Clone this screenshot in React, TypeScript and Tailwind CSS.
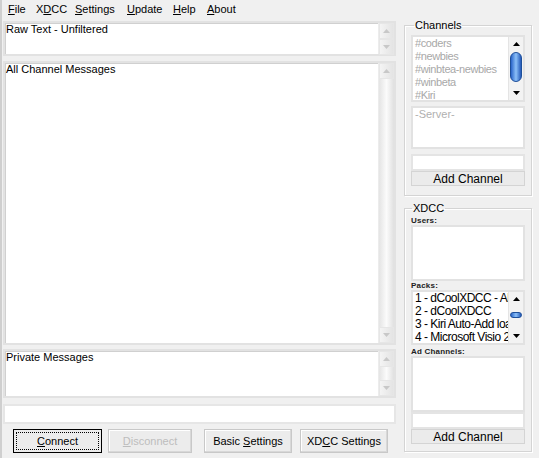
import React from "react";

function Arrow({ up, color }: { up?: boolean; color: string }) {
  return (
    <svg width="7" height="4" viewBox="0 0 7 4">
      <polygon points={up ? "3.5,0 7,4 0,4" : "0,0 7,0 3.5,4"} fill={color} />
    </svg>
  );
}

function PaleScroll({ short }: { short?: boolean }) {
  return (
    <div className="flex flex-col w-[16px] h-full shrink-0 border-l border-[#ececec]">
      <div className="h-[16px] shrink-0 flex items-center justify-center bg-gradient-to-r from-[#f4f4f4] to-[#e4e4e4] border border-[#e6e6e6]">
        <Arrow up color="#c8c8c8" />
      </div>
      {short ? (
        <div className="flex-1" />
      ) : (
        <div className="flex-1 bg-gradient-to-r from-[#e4e4e4] via-[#fbfbfb] to-[#e0e0e0]" />
      )}
      <div className="h-[16px] shrink-0 flex items-center justify-center bg-gradient-to-r from-[#f4f4f4] to-[#e4e4e4] border border-[#e6e6e6]">
        <Arrow color="#c8c8c8" />
      </div>
    </div>
  );
}

function BlueScroll({ thumbTop, thumbH }: { thumbTop: number; thumbH: number }) {
  return (
    <div className="flex flex-col w-[15px] h-full shrink-0 bg-[#f3f3f3] border-l border-[#e4e4e4]">
      <div className="h-[14px] shrink-0 flex items-center justify-center">
        <Arrow up color="#000" />
      </div>
      <div className="flex-1 relative">
        <div
          className="absolute left-[1px] right-[1px] rounded-[6px] border border-[#1d4f9a] bg-gradient-to-r from-[#2a64c8] via-[#8cc0f8] to-[#2559b8]"
          style={{ top: thumbTop, height: thumbH }}
        />
      </div>
      <div className="h-[14px] shrink-0 flex items-center justify-center">
        <Arrow color="#000" />
      </div>
    </div>
  );
}

function TextBox({ label, h, short }: { label: string; h: string; short?: boolean }) {
  return (
    <div className={`flex ${h} bg-white border-2 border-[#e2e2e2] shadow-[inset_1px_1px_0_#d0d0d0]`}>
      <div className="flex-1 px-[1px] text-[11px] leading-[13px] text-black">{label}</div>
      <PaleScroll short={short} />
    </div>
  );
}

function Btn({ children, w, focus, disabled }: { children: React.ReactNode; w: string; focus?: boolean; disabled?: boolean }) {
  return (
    <div
      className={`${w} h-[24px] flex items-center justify-center p-[2px] bg-[#ececec] text-[11px] ${
        focus ? "border border-black" : "border border-[#c8c8c8] shadow-[inset_-1px_-1px_0_#d8d8d8,inset_1px_1px_0_#fff]"
      } ${disabled ? "text-[#bdbdbd]" : "text-black"}`}
    >
      <div className={`w-full h-full flex items-center justify-center ${focus ? "border border-dotted border-black" : ""}`}>
        {children}
      </div>
    </div>
  );
}

function SmallLabel({ children }: { children: React.ReactNode }) {
  return <div className="h-[8px] text-[8px] leading-[8px] font-bold text-[#222] tracking-[0.2px]">{children}</div>;
}

function Field({ h }: { h: string }) {
  return <div className={`${h} bg-white border-2 border-[#e4e4e4]`} />;
}

function AddBtn() {
  return (
    <div className="h-[15px] flex items-center justify-center bg-[#ebebeb] border border-[#d4d4d4] text-[12px] leading-[12px] text-black">
      Add Channel
    </div>
  );
}

export default function App() {
  const channels = ["#coders", "#newbies", "#winbtea-newbies", "#winbeta", "#Kiri"];
  const packs = ["1 - dCoolXDCC - All", "2 - dCoolXDCC", "3 - Kiri Auto-Add load", "4 - Microsoft Visio 2003"];

  return (
    <div className="w-[539px] h-[458px] overflow-hidden bg-[#f0f0f0] border-l-2 border-[#cfcfcf] font-['Liberation_Sans',Arial,sans-serif] flex flex-col">
      <div className="h-[19px] flex items-center pl-[6px] text-[11px] text-black">
        <span className="w-[28px]"><u>F</u>ile</span>
        <span className="w-[39px]">X<u>D</u>CC</span>
        <span className="w-[52px]"><u>S</u>ettings</span>
        <span className="w-[46px]"><u>U</u>pdate</span>
        <span className="w-[34px]"><u>H</u>elp</span>
        <span><u>A</u>bout</span>
      </div>

      <div className="flex flex-1">
        <div className="w-[394px] pl-[1px] pt-[2px] flex flex-col">
          <TextBox label="Raw Text - Unfiltered" h="h-[35px]" short />
          <div className="h-[5px]" />
          <TextBox label="All Channel Messages" h="h-[284px]" />
          <div className="h-[4px]" />
          <TextBox label="Private Messages" h="h-[49px]" />
          <div className="h-[6px]" />
          <div className="h-[20px] bg-white border-2 border-[#e6e6e6]" />
          <div className="flex items-center mt-[5px] pl-[10px]">
            <Btn w="w-[89px]" focus>
              <span><u>C</u>onnect</span>
            </Btn>
            <div className="w-[6px]" />
            <Btn w="w-[84px]" disabled>
              <span><u>D</u>isconnect</span>
            </Btn>
            <div className="w-[12px]" />
            <Btn w="w-[88px]">
              <span>Basic <u>S</u>ettings</span>
            </Btn>
            <div className="w-[8px]" />
            <Btn w="w-[88px]">
              <span>XD<u>C</u>C Settings</span>
            </Btn>
          </div>
        </div>

        <div className="w-[128px] ml-[8px] flex flex-col">
          <fieldset className="min-w-0 h-[177px] border border-[#d4d4d4] shadow-[inset_1px_1px_0_#fff,1px_1px_0_#fff] px-[6px] pb-[6px]">
            <legend className="ml-[3px] px-[1px] text-[11px] leading-[12px] text-black">Channels</legend>
            <div className="h-[67px] mt-[4px] flex bg-white border-2 border-[#e2e2e2]">
              <div className="flex-1 min-w-0 overflow-hidden pl-[2px] text-[11px] leading-[13px] tracking-[-0.4px] text-[#a8a8a8] whitespace-nowrap">
                {channels.map((c) => (
                  <div key={c}>{c}</div>
                ))}
              </div>
              <BlueScroll thumbTop={1} thumbH={30} />
            </div>
            <div className="h-[43px] mt-[4px] bg-white border-2 border-[#e2e2e2] pl-[2px] text-[11px] leading-[13px] text-[#b0b0b0]">
              -Server-
            </div>
            <div className="mt-[5px]">
              <Field h="h-[17px]" />
              <AddBtn />
            </div>
          </fieldset>

          <fieldset className="min-w-0 mt-[6px] h-[250px] border border-[#d4d4d4] shadow-[inset_1px_1px_0_#fff,1px_1px_0_#fff] px-[6px]">
            <legend className="ml-[1px] px-[1px] text-[11px] leading-[12px] text-black">XDCC</legend>
            <div className="mt-[3px]">
              <SmallLabel>Users:</SmallLabel>
            </div>
            <div className="h-[56px] bg-white border-2 border-[#e2e2e2]" />
            <div className="mt-[1px]">
              <SmallLabel>Packs:</SmallLabel>
            </div>
            <div className="h-[55px] flex bg-white border-2 border-[#e2e2e2]">
              <div className="flex-1 min-w-0 overflow-hidden pl-[2px] text-[12px] leading-[13px] tracking-[-0.5px] text-black whitespace-nowrap">
                {packs.map((p) => (
                  <div key={p}>{p}</div>
                ))}
              </div>
              <BlueScroll thumbTop={6} thumbH={6} />
            </div>
            <div className="mt-[3px]">
              <SmallLabel>Ad Channels:</SmallLabel>
            </div>
            <div className="h-[56px] bg-white border-2 border-[#e2e2e2]" />
            <Field h="h-[17px]" />
            <AddBtn />
          </fieldset>
        </div>
      </div>
    </div>
  );
}
